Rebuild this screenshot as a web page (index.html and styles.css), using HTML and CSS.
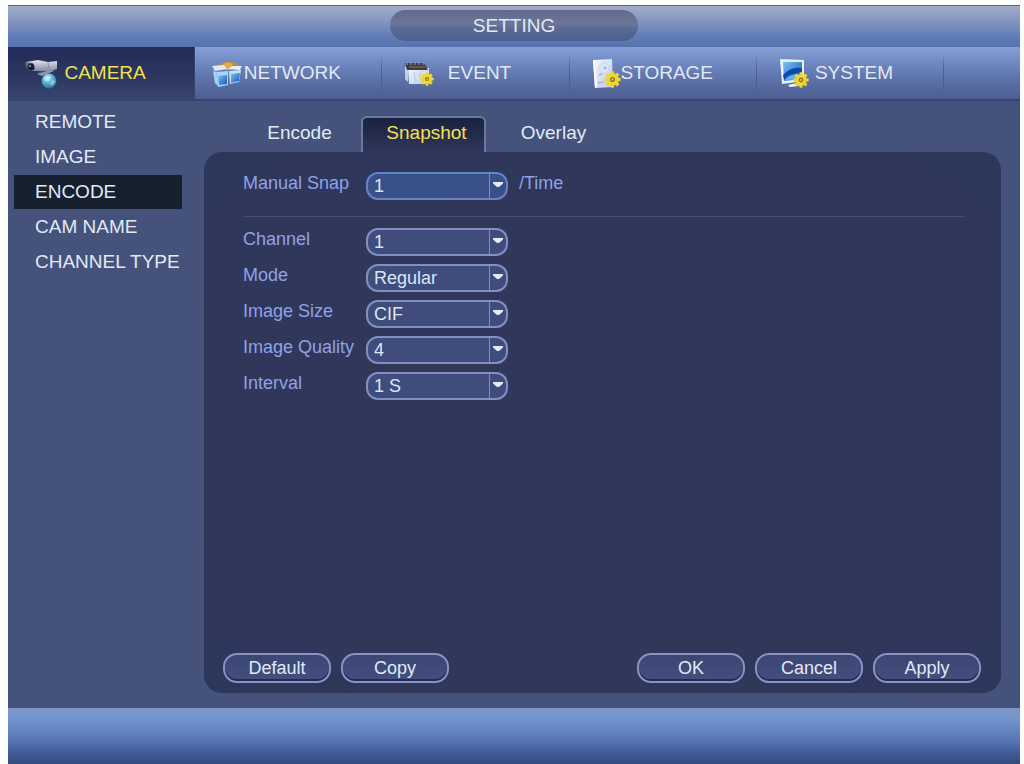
FILE: index.html
```html
<!DOCTYPE html>
<html lang="en">
  <head>
    <meta charset="UTF-8" />
    <meta name="viewport" content="width=device-width, initial-scale=1.0" />
    <title>Setting</title>
    <link rel="stylesheet" href="styles.css">
  </head>
  <body>
    <svg class="defs" width="0" height="0" aria-hidden="true">
      <defs>
        <linearGradient id="blue" x1="0" y1="0" x2="1" y2="1">
          <stop offset="0" stop-color="#7cc0f5" />
          <stop offset="1" stop-color="#1458b8" />
        </linearGradient>
        <linearGradient id="silver" x1="0" y1="0" x2="0" y2="1">
          <stop offset="0" stop-color="#e6e6f0" />
          <stop offset="1" stop-color="#8388a4" />
        </linearGradient>
        <linearGradient id="paper" x1="0" y1="0" x2="1" y2="1">
          <stop offset="0" stop-color="#f4f8ff" />
          <stop offset="1" stop-color="#b9c9ea" />
        </linearGradient>
        <radialGradient id="globe" cx="0.4" cy="0.3" r="0.8">
          <stop offset="0" stop-color="#c5eef8" />
          <stop offset="0.5" stop-color="#4fa9ce" />
          <stop offset="1" stop-color="#1b5f92" />
        </radialGradient>
        <symbol id="gear" viewBox="0 0 16 16">
          <g fill="#f0d531">
            <circle cx="8" cy="8" r="5.8" />
            <rect x="6.4" y="0.3" width="3.2" height="15.4" rx="0.8" />
            <rect x="6.4" y="0.3" width="3.2" height="15.4" rx="0.8" transform="rotate(45 8 8)" />
            <rect x="6.4" y="0.3" width="3.2" height="15.4" rx="0.8" transform="rotate(90 8 8)" />
            <rect x="6.4" y="0.3" width="3.2" height="15.4" rx="0.8" transform="rotate(135 8 8)" />
          </g>
          <circle cx="8" cy="8" r="2.4" fill="#8a7c32" />
          <circle cx="8" cy="8" r="1" fill="#d9c96a" />
        </symbol>
      </defs>
    </svg>

    <div class="window">
      <header class="titlebar">
        <h1>SETTING</h1>
      </header>

      <nav class="main-nav">
        <a class="active" href="#camera">
          <svg class="icon" viewBox="0 0 40 40" aria-hidden="true">
            <path d="M13 19 L26 16 L24 21 L15 22 Z" fill="#424a6b" />
            <path d="M13 21 L26 17 L30 18 L18 23 Z" fill="#8d93ad" />
            <path d="M2 9 L14 7 L24 9 L33 8 L33 16 L28 18 L9 18 L3 15 Z" fill="url(#silver)" />
            <path d="M1 9 L9 10 L11 17 L5 18 L2 14 Z" fill="#60647d" />
            <ellipse cx="7" cy="14" rx="3.4" ry="3.6" fill="#171c34" />
            <circle cx="6" cy="13" r="1" fill="#a7aed0" />
            <path d="M24 9 L25 17" stroke="#8c90a7" stroke-width="1" />
            <circle cx="25" cy="28" r="7.4" fill="url(#globe)" />
            <path d="M20 25 Q24 21 27 24 L25 28 L21 28 Z M28 27 L32 28 L28 33 L26 31 Z" fill="#d5f3f5" opacity="0.5" />
          </svg>
          <span>CAMERA</span>
        </a>
        <a href="#network">
          <svg class="icon" viewBox="0 0 40 40" aria-hidden="true">
            <path d="M7 13 Q17 8 27 12" fill="none" stroke="#b98d48" stroke-width="3" />
            <path d="M12 11 L17 9 L22 11 L19 17 L15 17 Z" fill="#dfad38" />
            <path d="M1 13 L13 12 L16 16 L4 18 Z" fill="#dcecff" />
            <path d="M17 16 L21 13 L31 13 L29 17 Z" fill="#e3f0ff" />
            <path d="M2 18 L5 19 L7 33 L4 30 Z" fill="#a8d2f6" />
            <path d="M5 19 L17 18 L17 32 L7 34 Z" fill="#a8d4f8" />
            <path d="M7 23 L16 22 L16 31 L8 32 Z" fill="url(#blue)" />
            <path d="M18 18 L30 17 L28 29 L19 31 Z" fill="#c2e0fa" />
            <path d="M20 21 L29 20 L28 28 L20 30 Z" fill="url(#blue)" />
          </svg>
          <span>NETWORK</span>
        </a>
        <a href="#event">
          <svg class="icon" viewBox="0 0 40 40" aria-hidden="true">
            <path d="M7 14 L10 14 L10 29 L7 26 Z" fill="#c3cde4" />
            <path d="M10 15 L31 15 L31 31 L11 31 Z" fill="url(#paper)" />
            <path d="M7 10 L26 10 L30 17 L9 17 Z" fill="#3b3b48" />
            <path d="M9 9 V12 M13 9 V12 M17 9 V12 M21 9 V12 M25 9 V12" stroke="#a2a4b2" stroke-width="1" />
            <path d="M11 14 H27" stroke="#8c7564" stroke-width="1" />
            <path d="M16 19 L18 30 M23 18 L21 25" stroke="#c0c9dc" stroke-width="1" />
            <use href="#gear" x="22" y="19" width="14" height="14" />
          </svg>
          <span>EVENT</span>
        </a>
        <a href="#storage">
          <svg class="icon" viewBox="0 0 40 40" aria-hidden="true">
            <path d="M7 7 L26 6 L27 34 L9 35 Z" fill="url(#paper)" />
            <path d="M7 7 L9 8 L11 34 L9 35 Z" fill="#ffffff" />
            <circle cx="18" cy="15" r="5" fill="#dce5f7" stroke="#cdd7ec" />
            <circle cx="19" cy="15" r="1.4" fill="#a4b2cf" />
            <path d="M13 22 L16 21 M12 30 L18 29" stroke="#a5b2cc" stroke-width="1.4" />
            <use href="#gear" x="18" y="18" width="17" height="17" />
          </svg>
          <span>STORAGE</span>
        </a>
        <a href="#system">
          <svg class="icon" viewBox="0 0 40 40" aria-hidden="true">
            <path d="M7 6 L31 7 L31 28 L9 31 Z" fill="#e8f1fb" />
            <path d="M10 9 L29 9 L29 26 L11 28 Z" fill="url(#blue)" />
            <path d="M10 22 Q18 13 29 15 L29 21 Q18 19 11 27 Z" fill="#0f4aa6" />
            <path d="M12 27 Q19 20 29 22 L29 26 Z" fill="#65b2f2" />
            <path d="M15 32 L24 30 L26 33 L17 34 Z" fill="#eef3fa" />
            <use href="#gear" x="20" y="19" width="16" height="16" />
          </svg>
          <span>SYSTEM</span>
        </a>
      </nav>

      <div class="content">
        <nav class="sidebar">
          <a href="#remote">REMOTE</a>
          <a href="#image">IMAGE</a>
          <a class="active" href="#encode">ENCODE</a>
          <a href="#cam-name">CAM NAME</a>
          <a href="#channel-type">CHANNEL TYPE</a>
        </nav>

        <main>
          <div class="tabs">
            <button type="button">Encode</button>
            <button type="button" class="active">Snapshot</button>
            <button type="button">Overlay</button>
          </div>

          <form class="panel">
            <div class="row first">
              <label for="manualSnap">Manual Snap</label>
              <div class="select focused">
                <select id="manualSnap">
                  <option>1</option>
                </select>
              </div>
              <span class="unit">/Time</span>
            </div>

            <div class="row">
              <label for="channel">Channel</label>
              <div class="select">
                <select id="channel">
                  <option>1</option>
                </select>
              </div>
            </div>
            <div class="row">
              <label for="mode">Mode</label>
              <div class="select">
                <select id="mode">
                  <option>Regular</option>
                </select>
              </div>
            </div>
            <div class="row">
              <label for="imageSize">Image Size</label>
              <div class="select">
                <select id="imageSize">
                  <option>CIF</option>
                </select>
              </div>
            </div>
            <div class="row">
              <label for="imageQuality">Image Quality</label>
              <div class="select">
                <select id="imageQuality">
                  <option>4</option>
                </select>
              </div>
            </div>
            <div class="row">
              <label for="interval">Interval</label>
              <div class="select">
                <select id="interval">
                  <option>1 S</option>
                </select>
              </div>
            </div>

            <div class="buttons">
              <button type="button">Default</button>
              <button type="button">Copy</button>
              <button type="button" class="push">OK</button>
              <button type="button">Cancel</button>
              <button type="button">Apply</button>
            </div>
          </form>
        </main>
      </div>

      <footer></footer>
    </div>
  </body>
</html>
```
FILE: styles.css
```css
* {
  box-sizing: border-box;
}
body {
  margin: 0;
  background: #fdfefe;
  font-family: "Liberation Sans", Arial, sans-serif;
  font-size: 18px;
  color: #e2e9f8;
}
a {
  color: inherit;
  text-decoration: none;
}
button,
select {
  font: inherit;
  color: inherit;
  cursor: pointer;
}
.defs {
  position: absolute;
}
.window {
  display: flex;
  flex-direction: column;
  min-height: 100vh;
  padding: 5px 4px 0 8px;
}

/* title bar */
.titlebar {
  display: flex;
  justify-content: center;
  padding: 4px 0 6px;
  border-top: 1px solid #5c6480;
  background: linear-gradient(#a3adc9, #8193c0 40%, #6580b8 70%, #5672ad);
}
h1 {
  width: 248px;
  margin: 0;
  border-radius: 16px;
  background: linear-gradient(#5f6a8e, #6b7697 45%, #5b6a93 60%, #4c5f90);
  font-size: 19px;
  font-weight: normal;
  line-height: 31px;
  text-align: center;
}

/* main menu */
.main-nav {
  display: flex;
  border-bottom: 2px solid #33426e;
  background: linear-gradient(#87a0d6, #6d85bf 35%, #5c70a8 65%, #4c5e90);
}
.main-nav a {
  display: grid;
  align-items: center;
  width: 18.5%;
  height: 52px;
  border-right: 1px solid transparent;
  border-image: linear-gradient(transparent 15%, #4c5f95 45%, #4c5f95 75%, transparent 90%) 1;
  font-size: 19px;
}
.main-nav a.active {
  height: 54px;
  margin-bottom: -2px;
  padding-bottom: 2px;
  border-image: none;
  border-right-color: #33426e;
  background: linear-gradient(#222b59, #2b3660 50%, #38466f);
  color: #f5e04e;
}
.icon,
.main-nav span {
  grid-area: 1 / 1;
}
.icon {
  width: 40px;
  height: 40px;
  margin-left: 16px;
}
.main-nav span {
  padding-left: 8px;
  text-align: center;
}

/* page body */
.content {
  display: flex;
  flex: 1;
  padding: 0 19px 15px 0;
  background: #44527c;
}
.sidebar {
  display: flex;
  flex-direction: column;
  gap: 1px;
  width: 196px;
  padding: 4px 22px 0 6px;
  font-size: 19px;
}
.sidebar a {
  padding-left: 21px;
  line-height: 34px;
  white-space: nowrap;
}
.sidebar a.active {
  background: #17202f;
}
main {
  display: flex;
  flex: 1;
  flex-direction: column;
}
.tabs {
  display: flex;
  gap: 2px;
  padding: 15px 0 0 30px;
}
.tabs button {
  width: 125px;
  height: 36px;
  padding: 0 0 4px 6px;
  border: 2px solid transparent;
  border-bottom: none;
  border-radius: 6px 6px 0 0;
  background: none;
  font-size: 19px;
}
.tabs button.active {
  border-color: #6b7a9f;
  background: linear-gradient(#1a2240, #2e365b);
  color: #f5e04e;
}
.panel {
  display: flex;
  flex: 1;
  flex-direction: column;
  gap: 8px;
  padding: 20px 20px 10px 19px;
  border-radius: 18px;
  background: radial-gradient(#31375a 50%, #2d375c);
}

/* form rows */
.row {
  display: flex;
  padding-left: 20px;
  line-height: 22px;
  color: #8fa2e6;
}
.row.first {
  margin: 0 16px 3px 20px;
  padding: 0 0 16px;
  border-bottom: 1px solid #474d70;
}
.row label {
  width: 123px;
  white-space: nowrap;
}
.unit {
  margin-left: 11px;
}
.select {
  position: relative;
  width: 142px;
  height: 28px;
  color: #dce5f8;
}
.select select {
  width: 100%;
  height: 100%;
  padding: 0 24px 0 6px;
  border: 2px solid #8290bf;
  border-radius: 12px;
  background: linear-gradient(to right, transparent 121px, #8290bf 121px, #8290bf 122px, transparent 122px), #3f4c7c;
  appearance: none;
}
.select.focused select {
  border-color: #6683c8;
  background-color: #3a5089;
}
/* drop-down arrow */
.select::after {
  content: "";
  position: absolute;
  top: 10px;
  right: 5px;
  width: 10px;
  height: 5px;
  background: #e2e9f8;
  clip-path: polygon(0 0, 100% 0, 100% 30%, 60% 100%, 40% 100%, 0 30%);
  pointer-events: none;
}

.buttons {
  display: flex;
  gap: 10px;
  margin-top: auto;
}
.buttons button {
  width: 108px;
  height: 30px;
  padding: 0;
  border: 2px solid #8793c2;
  border-radius: 14px;
  background: linear-gradient(#3b4674, #434f7d);
  box-shadow: inset 0 -2px 0 #232c52;
}
.buttons .push {
  margin-left: auto;
}

footer {
  height: 56px;
  background: linear-gradient(#7e97c8, #7294cd 20%, #5873b3 60%, #425b98 80%, #344b7c);
}
```
